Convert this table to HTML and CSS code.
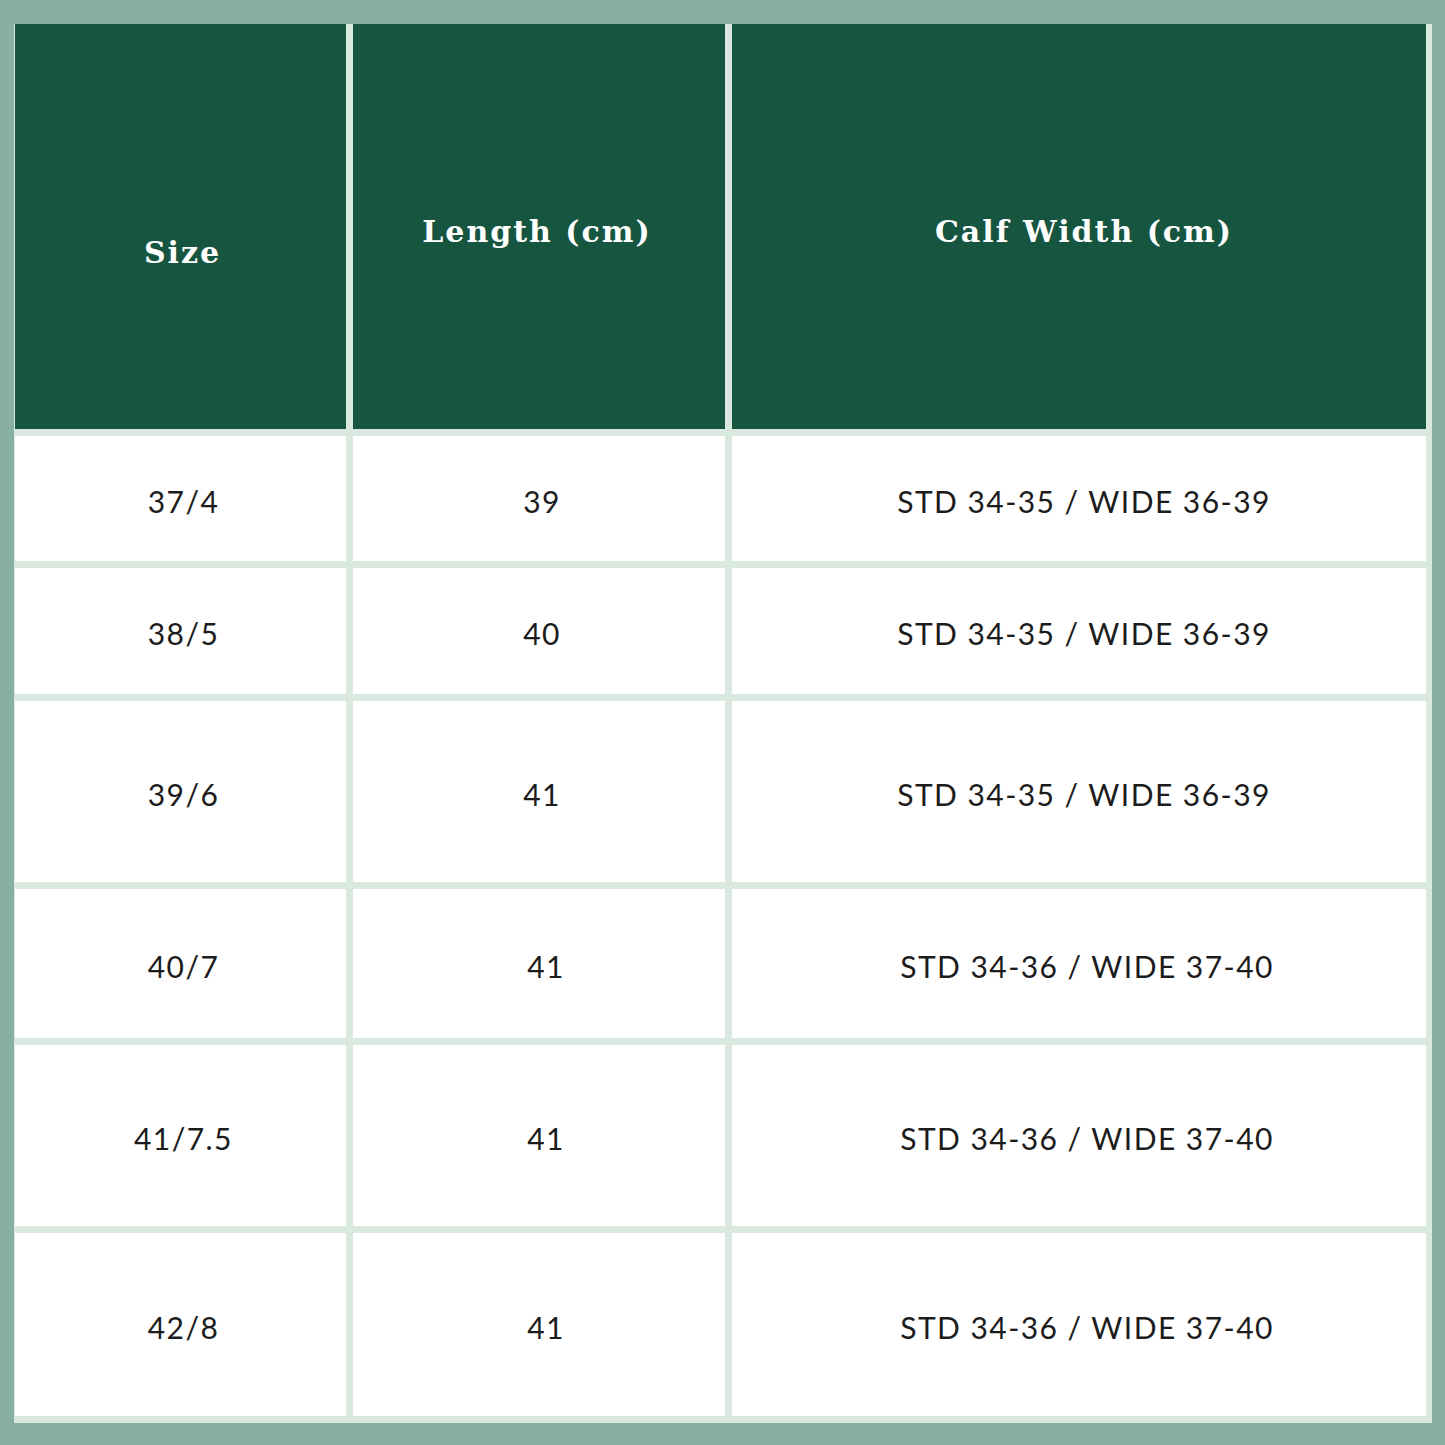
FILE: index.html
```html
<!DOCTYPE html>
<html>
<head>
<meta charset="utf-8">
<link rel="stylesheet" href="styles.css">
</head>
<body>
<div class="chart">
  <div class="head head-size"><span>Size</span></div>
  <div class="head head-length"><span>Length (cm)</span></div>
  <div class="head head-calf"><span>Calf Width (cm)</span></div>

  <div class="cell">37/4</div>
  <div class="cell">39</div>
  <div class="cell wide">STD 34-35 / WIDE 36-39</div>

  <div class="cell">38/5</div>
  <div class="cell">40</div>
  <div class="cell wide">STD 34-35 / WIDE 36-39</div>

  <div class="cell">39/6</div>
  <div class="cell">41</div>
  <div class="cell wide">STD 34-35 / WIDE 36-39</div>

  <div class="cell">40/7</div>
  <div class="cell shift">41</div>
  <div class="cell shift wide">STD 34-36 / WIDE 37-40</div>

  <div class="cell">41/7.5</div>
  <div class="cell shift">41</div>
  <div class="cell shift wide">STD 34-36 / WIDE 37-40</div>

  <div class="cell">42/8</div>
  <div class="cell shift">41</div>
  <div class="cell shift wide">STD 34-36 / WIDE 37-40</div>
</div>
</body>
</html>
```

FILE: styles.css
```css
html, body {
  margin: 0;
  padding: 0;
}
body {
  background: #87b0a0;
  width: 1445px;
  height: 1445px;
  padding: 24px 0 0 14px;
  box-sizing: border-box;
}
.chart {
  display: grid;
  grid-template-columns: 331px 372px 694px;
  grid-template-rows: 405px 125px 126px 181px 149px 181px 183px;
  gap: 7px;
  width: 1418px;
  padding: 0 7px 7px 1px;
  box-sizing: border-box;
  background: #d9e9e0;
}
.head {
  background: #165540;
  color: #ffffff;
  font-family: "DejaVu Serif", "Liberation Serif", serif;
  font-weight: bold;
  font-size: 30px;
  letter-spacing: 2px;
  display: flex;
  align-items: center;
  justify-content: center;
  padding-top: 10px;
  padding-left: 4px;
}
.head-size {
  padding-top: 52px;
}
.head-length {
  padding-left: 0;
  padding-right: 4px;
}
.head-calf {
  padding-left: 10px;
}
.cell {
  background: #ffffff;
  color: #1c1c1c;
  font-family: Lato, "Liberation Sans", sans-serif;
  font-size: 30px;
  letter-spacing: 1.45px;
  display: flex;
  align-items: center;
  justify-content: center;
  padding-left: 6px;
  padding-top: 4px;
}
.cell.wide {
  padding-left: 10px;
}
.cell.shift {
  padding-left: 14px;
}
.cell.shift.wide {
  padding-left: 16px;
}
```
